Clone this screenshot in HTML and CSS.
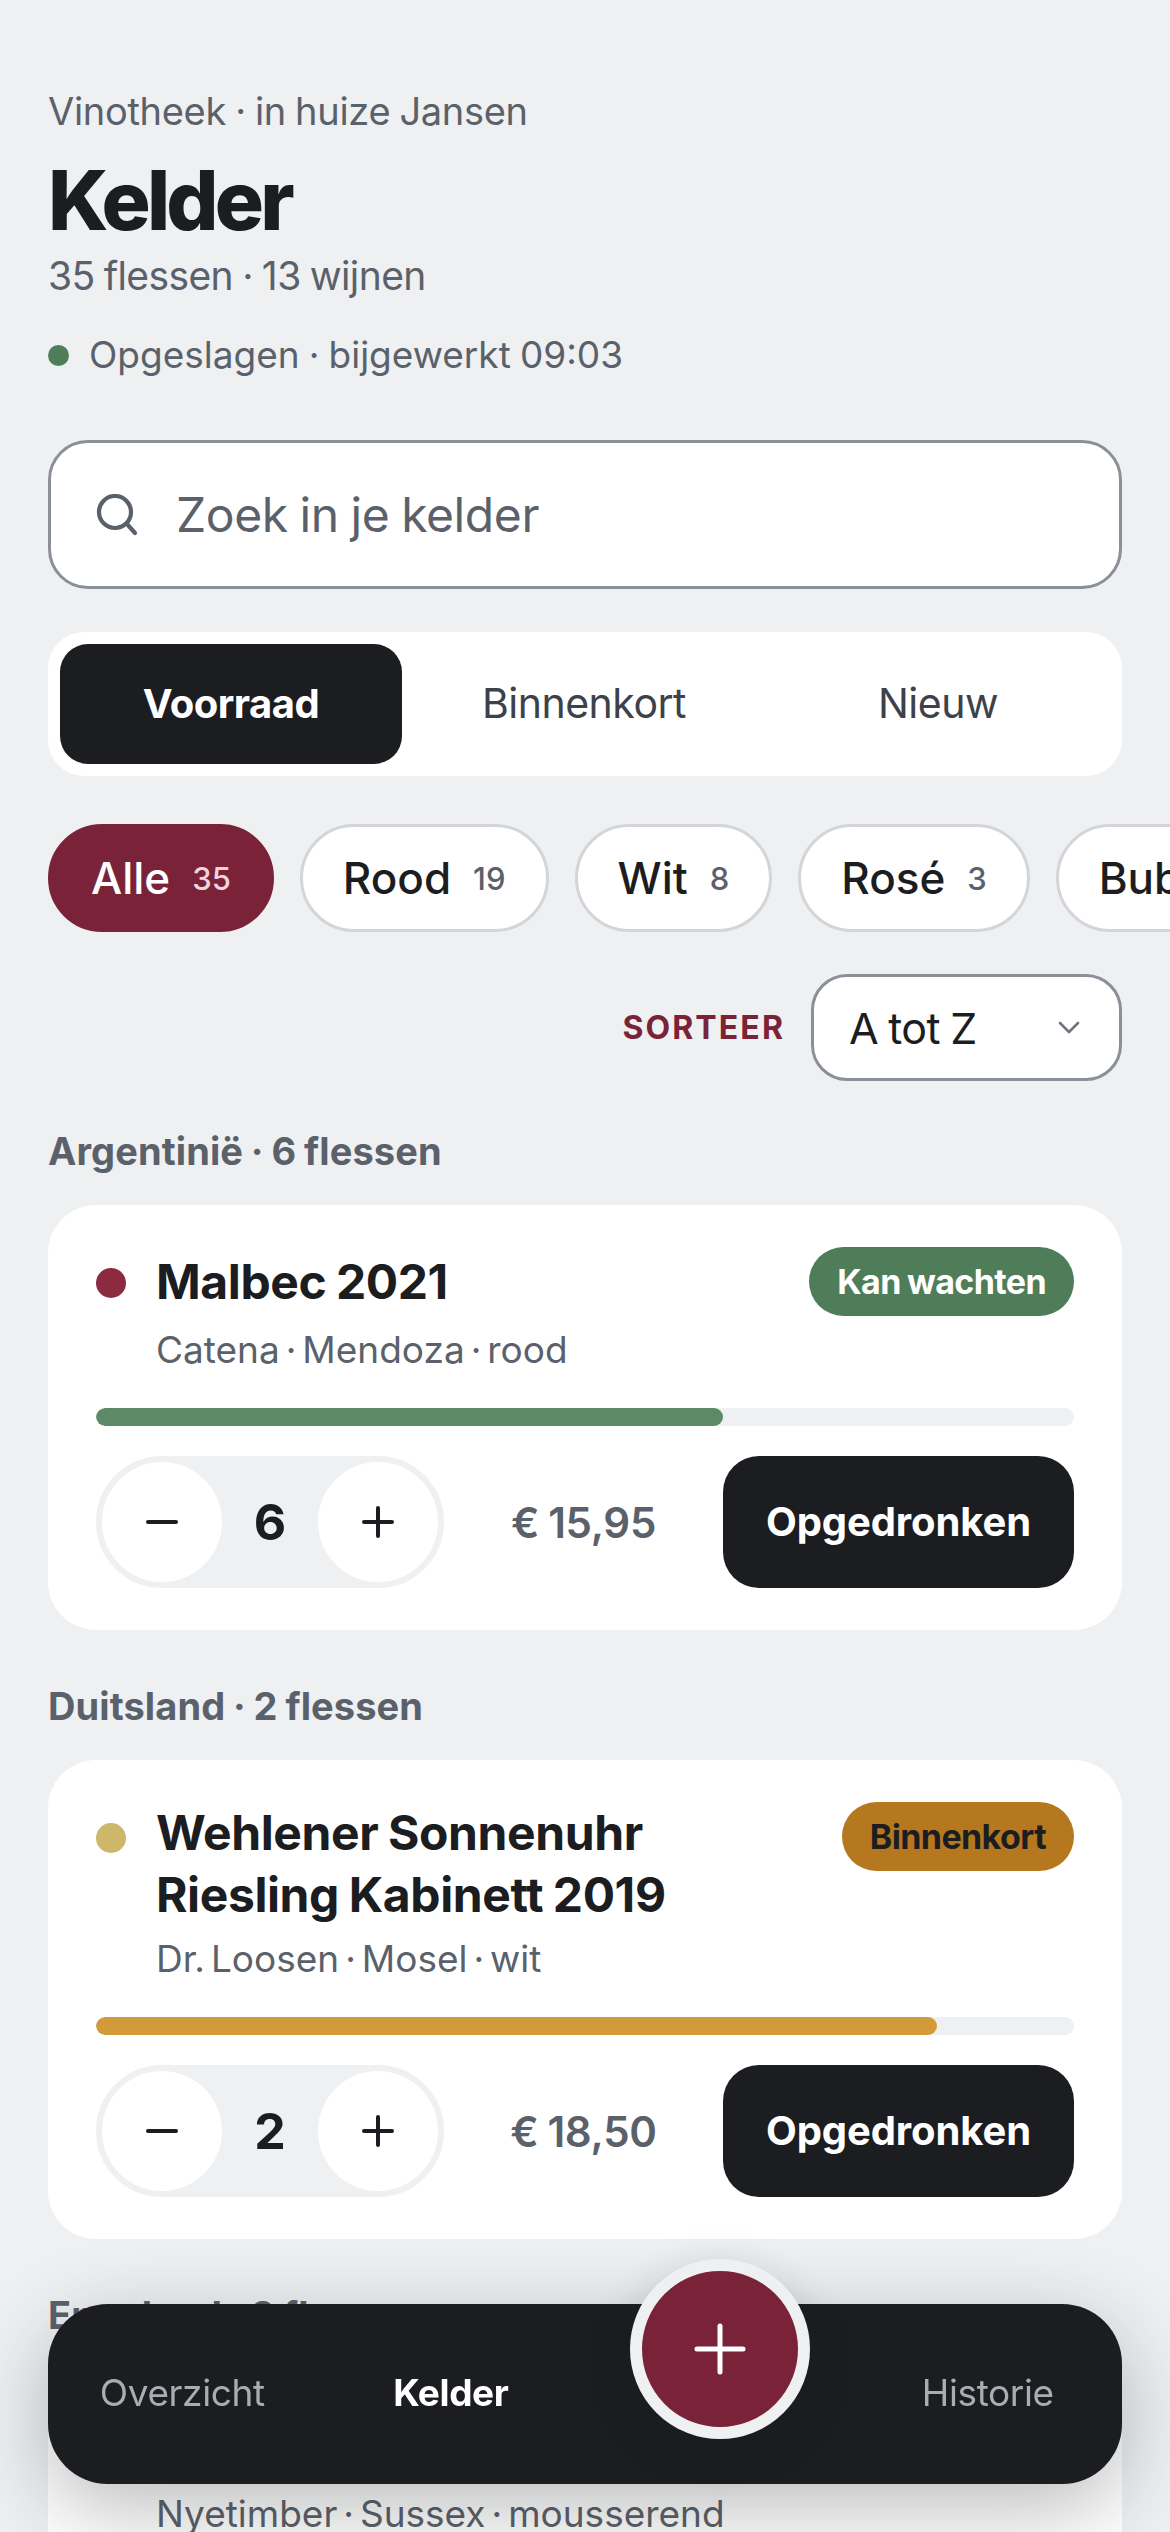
FILE: index.html
```html
<!DOCTYPE html>
<html lang="nl">

<head>
    <meta charset="UTF-8">
    <meta name="viewport" content="width=device-width, initial-scale=1.0">
    <title>Kelder</title>
    <link rel="stylesheet" href="styles.css">
</head>

<body>
    <main class="page">
        <header class="page-header">
            <div class="eyebrow">Vinotheek · in huize Jansen</div>
            <h1 class="page-title">Kelder</h1>
            <div class="page-sub">35 flessen · 13 wijnen</div>
            <div class="save-status"><span class="save-dot"></span>Opgeslagen · bijgewerkt 09:03</div>
        </header>

        <div class="search">
            <svg class="search-icon" viewBox="0 0 42 42" fill="none" stroke="currentColor" stroke-width="4.2" stroke-linecap="round">
                <circle cx="19" cy="18" r="16"></circle>
                <path d="M31 30l8 9"></path>
            </svg>
            <span>Zoek in je kelder</span>
        </div>

        <div class="tabs">
            <div class="tab tab-active">Voorraad</div>
            <div class="tab">Binnenkort</div>
            <div class="tab">Nieuw</div>
        </div>

        <div class="chips">
            <div class="chip chip-active">Alle <span class="chip-count">35</span></div>
            <div class="chip">Rood <span class="chip-count">19</span></div>
            <div class="chip">Wit <span class="chip-count">8</span></div>
            <div class="chip">Rosé <span class="chip-count">3</span></div>
            <div class="chip">Bubbels <span class="chip-count">5</span></div>
        </div>

        <div class="sort-row">
            <span class="sort-label">SORTEER</span>
            <div class="sort-select">
                <span>A tot Z</span>
                <svg class="sort-chevron" viewBox="0 0 22 13" fill="none" stroke="currentColor" stroke-width="2.6" stroke-linecap="round" stroke-linejoin="round">
                    <path d="M2 2l9 9 9-9"></path>
                </svg>
            </div>
        </div>

        <section class="group">
            <h2 class="group-title">Argentinië · 6 flessen</h2>
            <article class="wine">
                <div class="wine-top">
                    <span class="wine-dot dot-red"></span>
                    <div class="wine-info">
                        <h3 class="wine-name">Malbec 2021</h3>
                        <div class="wine-meta">Catena · Mendoza · rood</div>
                    </div>
                    <span class="badge badge-green">Kan wachten</span>
                </div>
                <div class="bar"><div class="bar-fill fill-green" style="width: 64.1%"></div></div>
                <div class="wine-actions">
                    <div class="stepper">
                        <div class="step-btn">
                            <svg viewBox="0 0 32 32" stroke="currentColor" stroke-width="4" stroke-linecap="round"><path d="M2 16h28"></path></svg>
                        </div>
                        <span class="step-value">6</span>
                        <div class="step-btn">
                            <svg viewBox="0 0 32 32" stroke="currentColor" stroke-width="4" stroke-linecap="round"><path d="M2 16h28M16 2v28"></path></svg>
                        </div>
                    </div>
                    <span class="price">€ 15,95</span>
                    <div class="drunk-btn">Opgedronken</div>
                </div>
            </article>
        </section>

        <section class="group">
            <h2 class="group-title">Duitsland · 2 flessen</h2>
            <article class="wine">
                <div class="wine-top">
                    <span class="wine-dot dot-white"></span>
                    <div class="wine-info">
                        <h3 class="wine-name">Wehlener Sonnenuhr<br>Riesling Kabinett 2019</h3>
                        <div class="wine-meta">Dr. Loosen · Mosel · wit</div>
                    </div>
                    <span class="badge badge-amber">Binnenkort</span>
                </div>
                <div class="bar"><div class="bar-fill fill-amber" style="width: 86%"></div></div>
                <div class="wine-actions">
                    <div class="stepper">
                        <div class="step-btn">
                            <svg viewBox="0 0 32 32" stroke="currentColor" stroke-width="4" stroke-linecap="round"><path d="M2 16h28"></path></svg>
                        </div>
                        <span class="step-value">2</span>
                        <div class="step-btn">
                            <svg viewBox="0 0 32 32" stroke="currentColor" stroke-width="4" stroke-linecap="round"><path d="M2 16h28M16 2v28"></path></svg>
                        </div>
                    </div>
                    <span class="price">€ 18,50</span>
                    <div class="drunk-btn">Opgedronken</div>
                </div>
            </article>
        </section>

        <section class="group">
            <h2 class="group-title">Engeland · 3 flessen</h2>
            <article class="wine">
                <div class="wine-top">
                    <span class="wine-dot dot-white"></span>
                    <div class="wine-info">
                        <h3 class="wine-name">Classic Cuvée 2016</h3>
                        <div class="wine-meta">Nyetimber · Sussex · mousserend</div>
                    </div>
                </div>
            </article>
        </section>
    </main>

    <nav class="bottom-nav">
        <a class="nav-item">Overzicht</a>
        <a class="nav-item nav-active">Kelder</a>
        <span></span>
        <a class="nav-item">Historie</a>
        <div class="fab">
            <svg viewBox="0 0 52 52" stroke="currentColor" stroke-width="5" stroke-linecap="round"><path d="M3 26h46M26 3v46"></path></svg>
        </div>
    </nav>
</body>

</html>
```

FILE: styles.css
```css
* {
    margin: 0;
    padding: 0;
    box-sizing: border-box;
}

html,
body {
    height: 100%;
    overflow: hidden;
}

body {
    background-color: #eef0f2;
    color: #1b1d21;
    font-family: Inter, "Open Sans", sans-serif;
    word-spacing: -0.08em;
}

.page {
    padding: 88px 48px 0;
}

/* header */
.eyebrow {
    font-size: 38px;
    line-height: 47px;
    color: #5b616a;
    letter-spacing: -0.3px;
}

.page-title {
    margin-top: 18px;
    font-size: 82px;
    line-height: 96px;
    font-weight: 800;
    letter-spacing: -3.8px;
}

.page-sub {
    margin-top: 3px;
    font-size: 39px;
    line-height: 47px;
    color: #5b616a;
    letter-spacing: -0.6px;
}

.save-status {
    display: flex;
    align-items: center;
    gap: 20px;
    margin-top: 33px;
    font-size: 37px;
    line-height: 46px;
    color: #5b616a;
}

.save-dot {
    width: 21px;
    height: 21px;
    border-radius: 50%;
    background: #4f7d5a;
}

/* search */
.search {
    display: flex;
    align-items: center;
    gap: 38px;
    height: 149px;
    margin-top: 62px;
    padding: 0 45px;
    background: #fff;
    border: 3px solid #8b8f97;
    border-radius: 40px;
    font-size: 48px;
    color: #5b616a;
    letter-spacing: -0.4px;
}

.search-icon {
    width: 42px;
    height: 42px;
    flex-shrink: 0;
}

/* tabs */
.tabs {
    display: grid;
    grid-template-columns: 342px 364px 1fr;
    height: 144px;
    margin-top: 43px;
    padding: 12px;
    background: #fff;
    border-radius: 36px;
}

.tab {
    display: flex;
    align-items: center;
    justify-content: center;
    padding-bottom: 2px;
    font-size: 41px;
    color: #3c414a;
    letter-spacing: -0.5px;
}

.tab-active {
    background: #1b1d21;
    border-radius: 28px;
    font-size: 40px;
    font-weight: 700;
    color: #fff;
}

/* chips */
.chips {
    display: flex;
    gap: 26px;
    margin: 48px -48px 0 0;
    overflow: hidden;
}

.chip {
    display: flex;
    align-items: center;
    flex-shrink: 0;
    gap: 22px;
    height: 108px;
    padding: 0 40px;
    background: #fff;
    border: 3px solid #d3d5d9;
    border-radius: 54px;
    font-size: 44px;
    font-weight: 500;
}

.chip-count {
    font-size: 31px;
    font-weight: 500;
    color: #5b616a;
}

.chip-active {
    background: #7a2338;
    border-color: #7a2338;
    color: #fff;
}

.chip-active .chip-count {
    color: #f0d5dc;
}

/* sort */
.sort-row {
    display: flex;
    align-items: center;
    justify-content: flex-end;
    gap: 26px;
    margin-top: 42px;
}

.sort-label {
    font-size: 32px;
    font-weight: 700;
    color: #7a2338;
    letter-spacing: 2.1px;
}

.sort-select {
    display: flex;
    align-items: center;
    justify-content: space-between;
    width: 311px;
    height: 107px;
    padding: 0 39px 0 35px;
    background: #fff;
    border: 3px solid #8b8f97;
    border-radius: 36px;
    font-size: 43px;
    letter-spacing: -0.6px;
}

.sort-chevron {
    width: 22px;
    height: 13px;
    color: #6f747c;
}

/* wine groups */
.group {
    margin-top: 46px;
}

.group + .group {
    margin-top: 52px;
}

.group-title {
    font-size: 38px;
    line-height: 48px;
    font-weight: 700;
    color: #5b616a;
    letter-spacing: 0.1px;
}

.wine {
    margin-top: 30px;
    padding: 42px 48px;
    background: #fff;
    border-radius: 48px;
}

.wine-top {
    display: flex;
    align-items: flex-start;
    gap: 30px;
}

.wine-dot {
    flex-shrink: 0;
    width: 30px;
    height: 30px;
    margin-top: 21px;
    border-radius: 50%;
}

.dot-red {
    background: #8c2a40;
}

.dot-white {
    background: #cdb86a;
}

.wine-info {
    flex: 1;
    min-width: 0;
}

.wine-name {
    display: flex;
    align-items: center;
    min-height: 70px;
    font-size: 48px;
    line-height: 62px;
    font-weight: 700;
    letter-spacing: -0.4px;
}

.wine-meta {
    margin-top: 10px;
    font-size: 37px;
    line-height: 46px;
    color: #5b616a;
    word-spacing: -0.12em;
}

.badge {
    display: flex;
    align-items: center;
    flex-shrink: 0;
    height: 69px;
    padding: 0 28px;
    border-radius: 35px;
    font-size: 34px;
    font-weight: 700;
    letter-spacing: -0.6px;
}

.badge-green {
    background: #4f7d5a;
    color: #fff;
}

.badge-amber {
    background: #b5781e;
    color: #1b1d21;
}

.bar {
    height: 18px;
    margin-top: 35px;
    background: #eef0f2;
    border-radius: 9px;
    overflow: hidden;
}

.bar-fill {
    height: 100%;
    border-radius: 9px;
}

.fill-green {
    background: #5c8a66;
}

.fill-amber {
    background: #d29a39;
}

.wine-actions {
    display: flex;
    align-items: center;
    margin-top: 30px;
}

.stepper {
    display: flex;
    align-items: center;
    justify-content: space-between;
    flex-shrink: 0;
    width: 348px;
    height: 132px;
    background: #eef0f2;
    border: 6px solid #eef0f2;
    border-radius: 66px;
}

.step-btn {
    display: flex;
    align-items: center;
    justify-content: center;
    width: 120px;
    height: 120px;
    background: #fff;
    border-radius: 50%;
}

.step-btn svg {
    width: 32px;
    height: 32px;
}

.step-value {
    font-size: 50px;
    font-weight: 700;
}

.price {
    flex: 1;
    text-align: center;
    font-size: 42px;
    font-weight: 600;
    color: #5b616a;
    letter-spacing: -0.3px;
}

.drunk-btn {
    display: flex;
    align-items: center;
    justify-content: center;
    flex-shrink: 0;
    width: 351px;
    height: 132px;
    padding-bottom: 2px;
    background: #1b1d21;
    border-radius: 36px;
    font-size: 40px;
    font-weight: 700;
    color: #fff;
    letter-spacing: -0.1px;
}

/* bottom nav */
.bottom-nav {
    position: fixed;
    left: 48px;
    right: 48px;
    bottom: 48px;
    display: grid;
    grid-template-columns: repeat(4, 1fr);
    align-items: center;
    height: 180px;
    padding-bottom: 4px;
    background: #1b1d21;
    border-radius: 60px;
    box-shadow: 0 24px 84px rgba(27, 29, 33, 0.3);
}

.nav-item {
    text-align: center;
    font-size: 37px;
    color: #a9acb1;
    letter-spacing: -0.4px;
}

.nav-active {
    font-weight: 700;
    color: #fff;
}

.fab {
    position: absolute;
    top: -45px;
    left: 582px;
    display: flex;
    align-items: center;
    justify-content: center;
    width: 180px;
    height: 180px;
    background: #7a2338;
    border: 12px solid #eef0f2;
    border-radius: 50%;
    color: #fff;
    box-shadow: 0 12px 48px rgba(27, 29, 33, 0.2);
}

.fab svg {
    width: 52px;
    height: 52px;
}
```
